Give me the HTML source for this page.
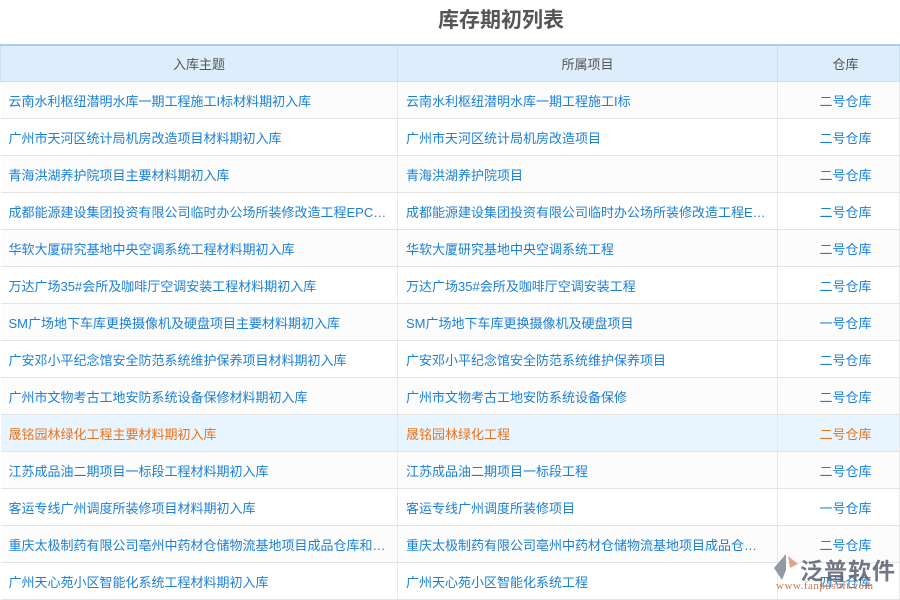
<!DOCTYPE html><html><head><meta charset="utf-8"><style>
body{margin:0;width:900px;height:600px;overflow:hidden;background:#fff;font-family:"Liberation Sans","Noto Sans CJK SC",sans-serif}
h1{margin:0;height:44px;line-height:42px;text-align:center;font-size:21px;color:#555;font-weight:bold;padding-left:102px}
table{border-collapse:collapse;width:900px;table-layout:fixed}
th{height:35px;padding:0;background:#deedfb;color:#555;font-weight:normal;font-size:13px;border:1px solid #c9dff2;border-top:2px solid #a9cdee}
td{height:36px;font-size:13px;color:#1b7fd8;border-bottom:1px solid #e4e4e4;border-right:1px solid #e8e8e8;padding:0 8px;white-space:nowrap;overflow:hidden;text-overflow:ellipsis}
td:nth-child(3),th:nth-child(3){text-align:center;padding:0 0 0 14px}
tr:nth-child(even) td{background:#fcfcfd}
tr.hl td{background:#e9f5fe;color:#e8741e}
.logo{position:absolute;left:772px;top:550px;width:128px;height:45px;white-space:nowrap}
.logo b{position:absolute;left:28px;top:2px;font-size:23px;color:#5a6070;opacity:.85;letter-spacing:1px}
.logo small{position:absolute;left:4px;top:30px;font-size:11px;color:#c87a55;font-family:"Liberation Serif",serif;letter-spacing:.5px}
</style></head><body>
<h1>库存期初列表</h1>
<table><colgroup><col style="width:397px"><col style="width:380px"><col></colgroup>
<tr><th>入库主题</th><th>所属项目</th><th>仓库</th></tr>
<tr><td>云南水利枢纽潜明水库一期工程施工I标材料期初入库</td><td>云南水利枢纽潜明水库一期工程施工I标</td><td>二号仓库</td></tr>
<tr><td>广州市天河区统计局机房改造项目材料期初入库</td><td>广州市天河区统计局机房改造项目</td><td>二号仓库</td></tr>
<tr><td>青海洪湖养护院项目主要材料期初入库</td><td>青海洪湖养护院项目</td><td>二号仓库</td></tr>
<tr><td>成都能源建设集团投资有限公司临时办公场所装修改造工程EPC总承包项目材料期初入库</td><td>成都能源建设集团投资有限公司临时办公场所装修改造工程EPC</td><td>二号仓库</td></tr>
<tr><td>华软大厦研究基地中央空调系统工程材料期初入库</td><td>华软大厦研究基地中央空调系统工程</td><td>二号仓库</td></tr>
<tr><td>万达广场35#会所及咖啡厅空调安装工程材料期初入库</td><td>万达广场35#会所及咖啡厅空调安装工程</td><td>二号仓库</td></tr>
<tr><td>SM广场地下车库更换摄像机及硬盘项目主要材料期初入库</td><td>SM广场地下车库更换摄像机及硬盘项目</td><td>一号仓库</td></tr>
<tr><td>广安邓小平纪念馆安全防范系统维护保养项目材料期初入库</td><td>广安邓小平纪念馆安全防范系统维护保养项目</td><td>二号仓库</td></tr>
<tr><td>广州市文物考古工地安防系统设备保修材料期初入库</td><td>广州市文物考古工地安防系统设备保修</td><td>二号仓库</td></tr>
<tr class="hl"><td>晟铭园林绿化工程主要材料期初入库</td><td>晟铭园林绿化工程</td><td>二号仓库</td></tr>
<tr><td>江苏成品油二期项目一标段工程材料期初入库</td><td>江苏成品油二期项目一标段工程</td><td>二号仓库</td></tr>
<tr><td>客运专线广州调度所装修项目材料期初入库</td><td>客运专线广州调度所装修项目</td><td>一号仓库</td></tr>
<tr><td>重庆太极制药有限公司亳州中药材仓储物流基地项目成品仓库和冷库材料期初入库</td><td>重庆太极制药有限公司亳州中药材仓储物流基地项目成品仓库和冷库</td><td>二号仓库</td></tr>
<tr><td>广州天心苑小区智能化系统工程材料期初入库</td><td>广州天心苑小区智能化系统工程</td><td>四号仓库</td></tr>
</table>
<div class="logo"><svg width="28" height="30" style="position:absolute;left:0;top:2px"><path d="M14 2 L2 16 L10 28 L14 18 Z" fill="#7a8090" opacity=".8"/><path d="M16 4 L26 12 L18 16 Z" fill="#d89070" opacity=".8"/></svg><b>泛普软件</b><small>www.fanpusoft.com</small></div>
</body></html>
